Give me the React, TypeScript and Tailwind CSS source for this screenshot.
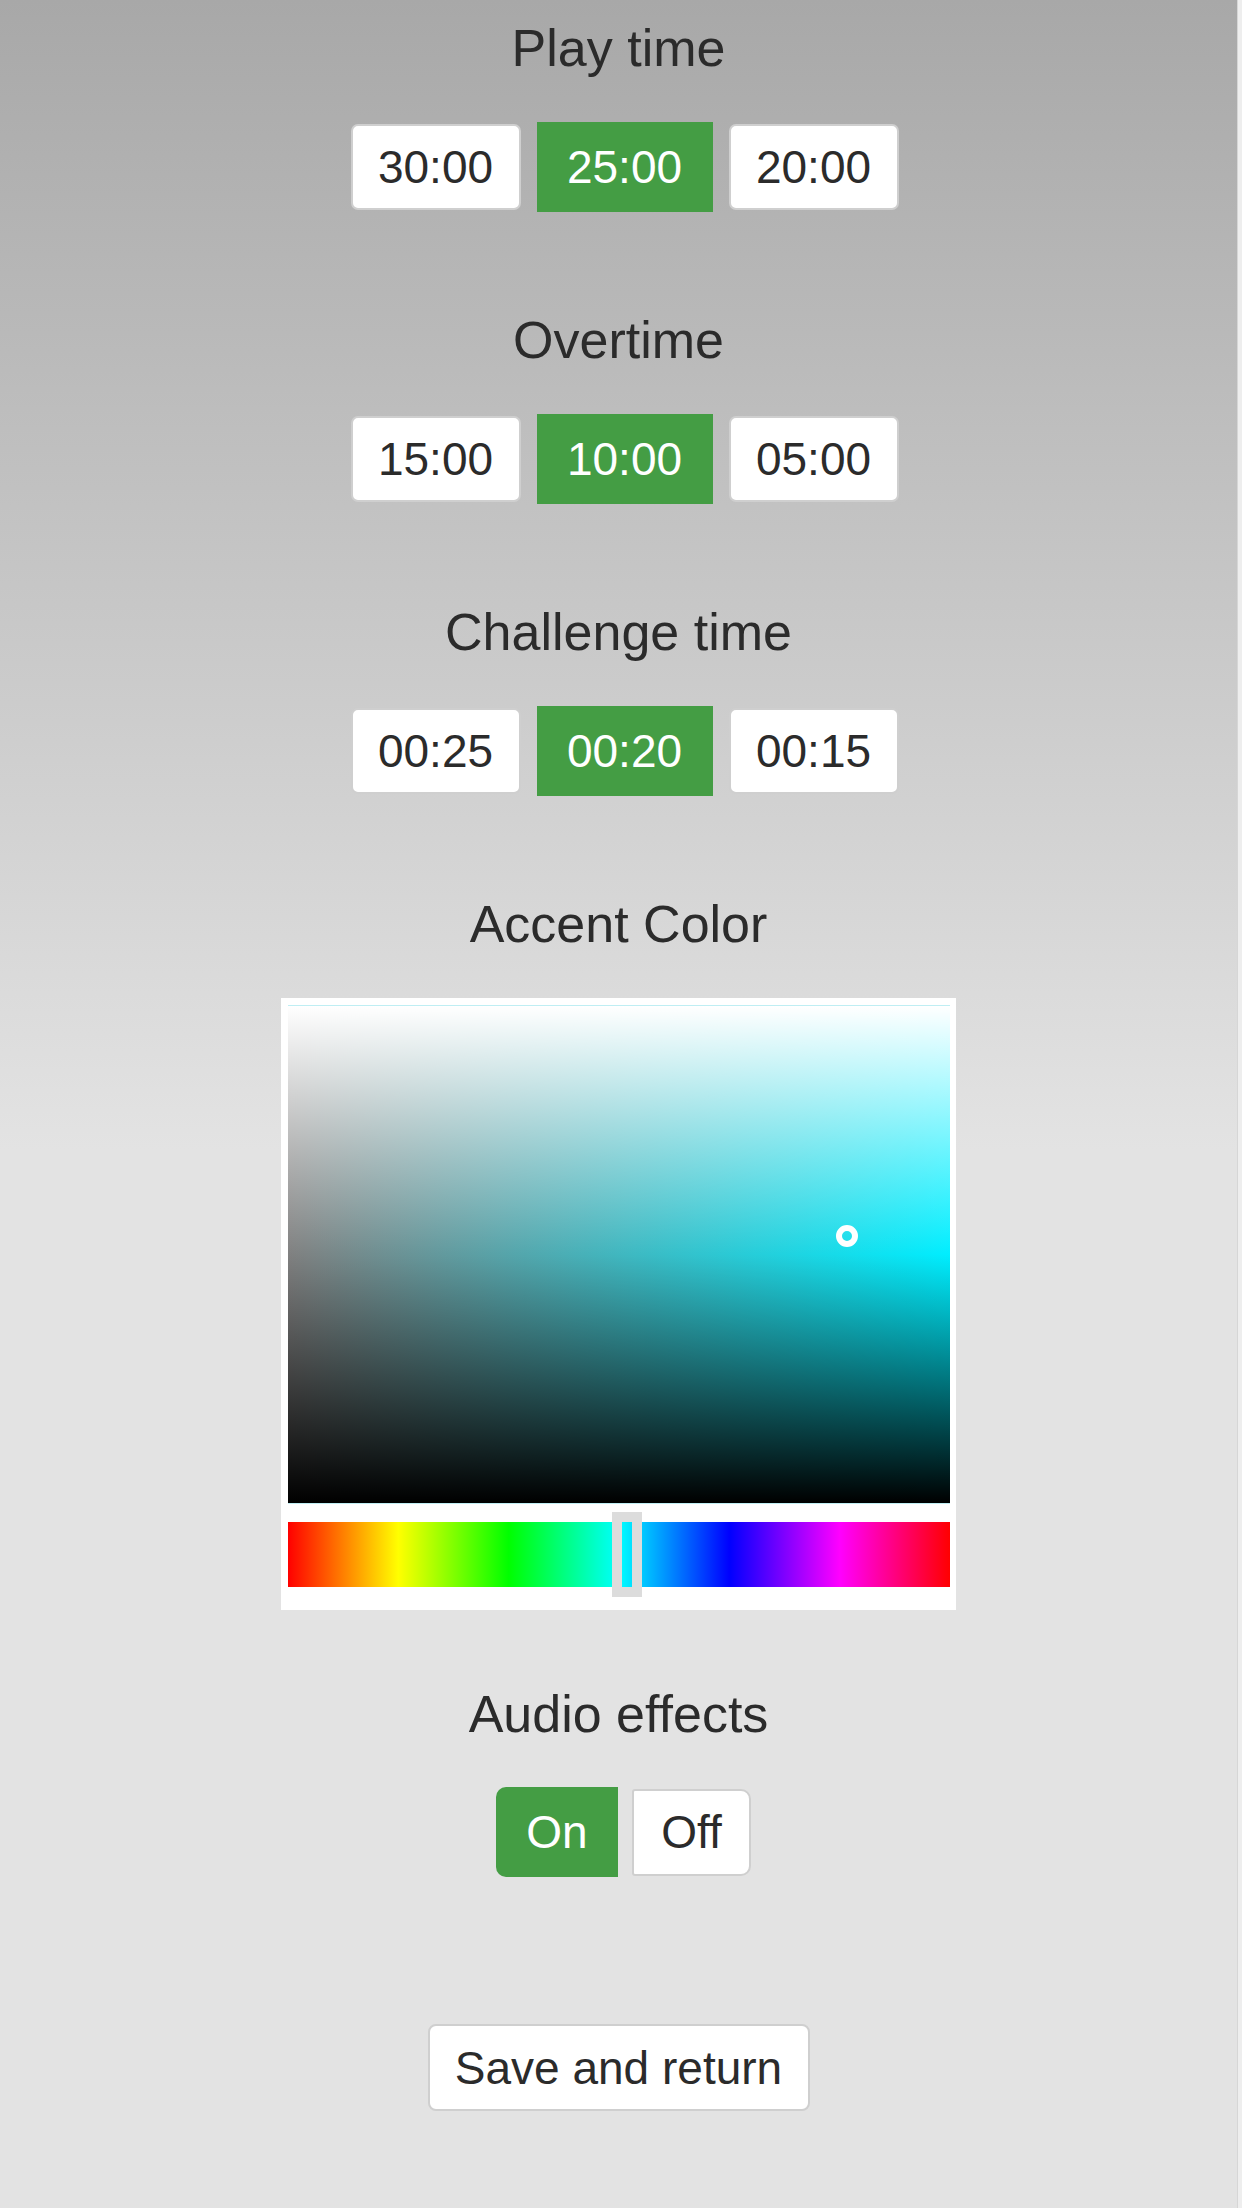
import React from "react";

const font = { fontFamily: '"Liberation Sans", Arial, sans-serif' };

function Heading({ children }: { children: React.ReactNode }) {
  return (
    <h3 className="text-center text-[52px] leading-[60px] font-normal text-[#2b2b2b]">
      {children}
    </h3>
  );
}

function OptionRow({ options, active }: { options: string[]; active: number }) {
  return (
    <div className="flex h-[90px] items-center justify-center gap-[16px] pl-[12px]">
      {options.map((o, i) =>
        i === active ? (
          <div
            key={o}
            className="flex h-[90px] w-[176px] items-center justify-center bg-[#449d44] text-[46px] leading-none text-white"
          >
            {o}
          </div>
        ) : (
          <div
            key={o}
            className="flex h-[86px] w-[170px] items-center justify-center rounded-[7px] border-2 border-[#cfcfcf] bg-white text-[46px] leading-none text-[#2b2b2b]"
          >
            {o}
          </div>
        )
      )}
    </div>
  );
}

export default function App() {
  return (
    <div className="flex min-h-[2208px] w-full" style={font}>
      <div className="flex-1 bg-[linear-gradient(to_bottom,#a8a8a8_0px,#e3e3e3_1150px)] pt-[18px]">
        <Heading>Play time</Heading>
        <div className="mt-[44px]">
          <OptionRow options={["30:00", "25:00", "20:00"]} active={1} />
        </div>

        <div className="mt-[98px]">
          <Heading>Overtime</Heading>
        </div>
        <div className="mt-[44px]">
          <OptionRow options={["15:00", "10:00", "05:00"]} active={1} />
        </div>

        <div className="mt-[98px]">
          <Heading>Challenge time</Heading>
        </div>
        <div className="mt-[44px]">
          <OptionRow options={["00:25", "00:20", "00:15"]} active={1} />
        </div>

        <div className="mt-[98px]">
          <Heading>Accent Color</Heading>
        </div>

        <div className="mt-[44px] flex justify-center">
          <div className="flex h-[612px] w-[675px] flex-col bg-white pt-[7px] pl-[7px] pr-[6px]">
            <div className="relative h-[499px] w-full border-y border-[#bfeef3] bg-[linear-gradient(to_bottom,#ffffff_0%,rgba(255,255,255,0)_50%,rgba(0,0,0,0)_50%,#000000_100%),linear-gradient(to_right,#808080,#00eeff)]">
              <div className="absolute left-[548px] top-[219px] h-[22px] w-[22px] rounded-full border-[6px] border-white" />
            </div>
            <div className="relative mt-[18px] h-[65px] w-full bg-[linear-gradient(to_right,#ff0000,#ffff00,#00ff00,#00ffff,#0000ff,#ff00ff,#ff0000)]">
              <div className="absolute left-[324px] top-[-10px] h-[85px] w-[30px] border-[10px] border-[#dcdcdc]" />
            </div>
          </div>
        </div>

        <div className="mt-[74px]">
          <Heading>Audio effects</Heading>
        </div>
        <div className="mt-[43px] flex h-[90px] items-center justify-center gap-[14px] pl-[10px]">
          <div className="flex h-[90px] w-[122px] items-center justify-center rounded-l-[10px] bg-[#449d44] text-[46px] leading-none text-white">
            On
          </div>
          <div className="flex h-[87px] w-[119px] items-center justify-center rounded-r-[10px] rounded-l-[3px] border-2 border-[#cfcfcf] bg-white text-[46px] leading-none text-[#2b2b2b]">
            Off
          </div>
        </div>

        <div className="mt-[147px] flex justify-center">
          <div className="flex h-[87px] w-[382px] items-center justify-center rounded-[8px] border-2 border-[#cfcfcf] bg-white text-[46px] leading-none text-[#2b2b2b]">
            Save and return
          </div>
        </div>
      </div>
      <div className="w-[5px] border-l border-[#d6d6d6] bg-[#eeeeee]" />
    </div>
  );
}
